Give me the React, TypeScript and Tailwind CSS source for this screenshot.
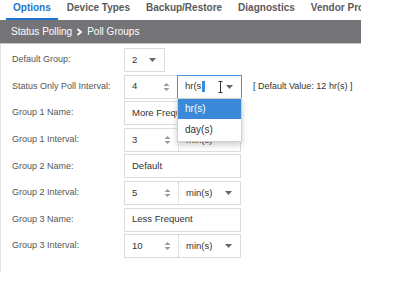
const tabs = ["Options", "Device Types", "Backup/Restore", "Diagnostics", "Vendor Profiles"];

function Caret() {
  return (
    <svg width="7" height="4" viewBox="0 0 7 4" className="shrink-0">
      <path d="M0 0 L7 0 L3.5 4 Z" fill="#666" />
    </svg>
  );
}

function Spinner() {
  return (
    <svg width="7" height="10" viewBox="0 0 7 10" className="shrink-0">
      <path d="M0.5 4 L3.5 1 L6.5 4 Z" fill="#999" />
      <path d="M0.5 6 L3.5 9 L6.5 6 Z" fill="#999" />
    </svg>
  );
}

function IntervalField({ value, unit }: { value: string; unit: string }) {
  return (
    <div className="flex h-[24px] w-[117px] shrink-0 border border-[#dcdcdc] bg-white">
      <div className="flex w-[53px] items-center justify-between pl-[7px] pr-[7px] text-[9.5px] text-[#333]">
        <span>{value}</span>
        <Spinner />
      </div>
      <div className="flex flex-1 items-center justify-between border-l border-dotted border-[#ccc] pl-[7px] pr-[8px] text-[9.5px] text-[#333]">
        <span>{unit}</span>
        <Caret />
      </div>
    </div>
  );
}

function TextField({ value }: { value: string }) {
  return (
    <div className="flex h-[24px] w-[117px] shrink-0 items-center border border-[#dcdcdc] bg-white px-[7px] text-[9.5px] text-[#333]">
      {value}
    </div>
  );
}

function Row({ label, children }: { label: string; children: React.ReactNode }) {
  return (
    <div className="flex h-[24px] items-center">
      <div className="w-[112px] shrink-0 whitespace-nowrap text-[9px] text-[#555]">{label}</div>
      {children}
    </div>
  );
}

export default function App() {
  return (
    <div className="relative h-[298px] w-[400px] bg-white" style={{ fontFamily: '"Liberation Sans", Arial, sans-serif' }}>
      <div className="w-[361px] overflow-hidden">
        {/* Tabs */}
        <div className="flex h-[20px] items-end gap-[2px] whitespace-nowrap pl-[6px] text-[10px] font-bold">
          {tabs.map((t, i) => (
            <div
              key={t}
              className={
                i === 0
                  ? "shrink-0 border-b-2 border-[#1f74cc] px-[7px] pb-[3px] text-[#1f74cc]"
                  : "shrink-0 px-[7px] pb-[5px] text-[#5a5a5a]"
              }
            >
              {t}
            </div>
          ))}
        </div>

        {/* Breadcrumb bar */}
        <div className="flex h-[24px] items-center border-b border-[#c8c8c8] bg-[#747478] pl-[11px] text-[10px] text-white">
          <span>Status Polling</span>
          <svg width="7" height="8" viewBox="0 0 7 8" className="mx-[4px]">
            <path d="M1.5 1 L5 4 L1.5 7" stroke="white" strokeWidth="1.8" fill="none" />
          </svg>
          <span>Poll Groups</span>
        </div>

        {/* Form */}
        <div className="flex flex-col gap-[2.6px] border-l border-[#e2e2e2] pb-[14px] pl-[11px] pt-[4px]">
          <Row label="Default Group:">
            <div className="flex h-[24px] w-[41px] shrink-0 items-center justify-between border border-[#dcdcdc] pl-[7px] pr-[8px] text-[9.5px] text-[#333]">
              <span>2</span>
              <Caret />
            </div>
          </Row>
          <Row label="Status Only Poll Interval:">
            <div className="flex h-[24px] shrink-0">
              <div className="flex w-[53px] items-center justify-between border border-r-0 border-[#dcdcdc] pl-[7px] pr-[7px] text-[9.5px] text-[#333]">
                <span>4</span>
                <Spinner />
              </div>
              <div className="relative flex w-[65px] items-center border border-[#4a90d9] pl-[7px] pr-[8px] text-[9.5px] text-[#333]">
                <span>hr(s</span>
                <span className="ml-[1px] inline-block h-[11px] w-[3px] bg-[#3b8ad9]" />
                <svg width="5" height="12" viewBox="0 0 5 12" className="ml-[13px]">
                  <path d="M0.5 0.5 H4.5 M2.5 0.5 V11.5 M0.5 11.5 H4.5" stroke="#333" strokeWidth="1" fill="none" />
                </svg>
                <div className="ml-auto">
                  <Caret />
                </div>
                <div className="absolute left-[-1px] top-[22px] z-10 w-[65px] border border-[#d0d0d0] bg-white shadow-[0_3px_6px_rgba(0,0,0,0.2)]">
                  <div className="flex h-[20px] items-center bg-[#3b8ad9] px-[7px] text-[10px] text-white">hr(s)</div>
                  <div className="flex h-[22px] items-center px-[7px] text-[10px] text-[#333]">day(s)</div>
                </div>
              </div>
              <div className="ml-[11px] flex items-center whitespace-nowrap text-[9px] text-[#333]">
                [ Default Value: 12 hr(s) ]
              </div>
            </div>
          </Row>
          <Row label="Group 1 Name:">
            <TextField value="More Frequent" />
          </Row>
          <Row label="Group 1 Interval:">
            <IntervalField value="3" unit="min(s)" />
          </Row>
          <Row label="Group 2 Name:">
            <TextField value="Default" />
          </Row>
          <Row label="Group 2 Interval:">
            <IntervalField value="5" unit="min(s)" />
          </Row>
          <Row label="Group 3 Name:">
            <TextField value="Less Frequent" />
          </Row>
          <Row label="Group 3 Interval:">
            <IntervalField value="10" unit="min(s)" />
          </Row>
        </div>
      </div>
    </div>
  );
}
